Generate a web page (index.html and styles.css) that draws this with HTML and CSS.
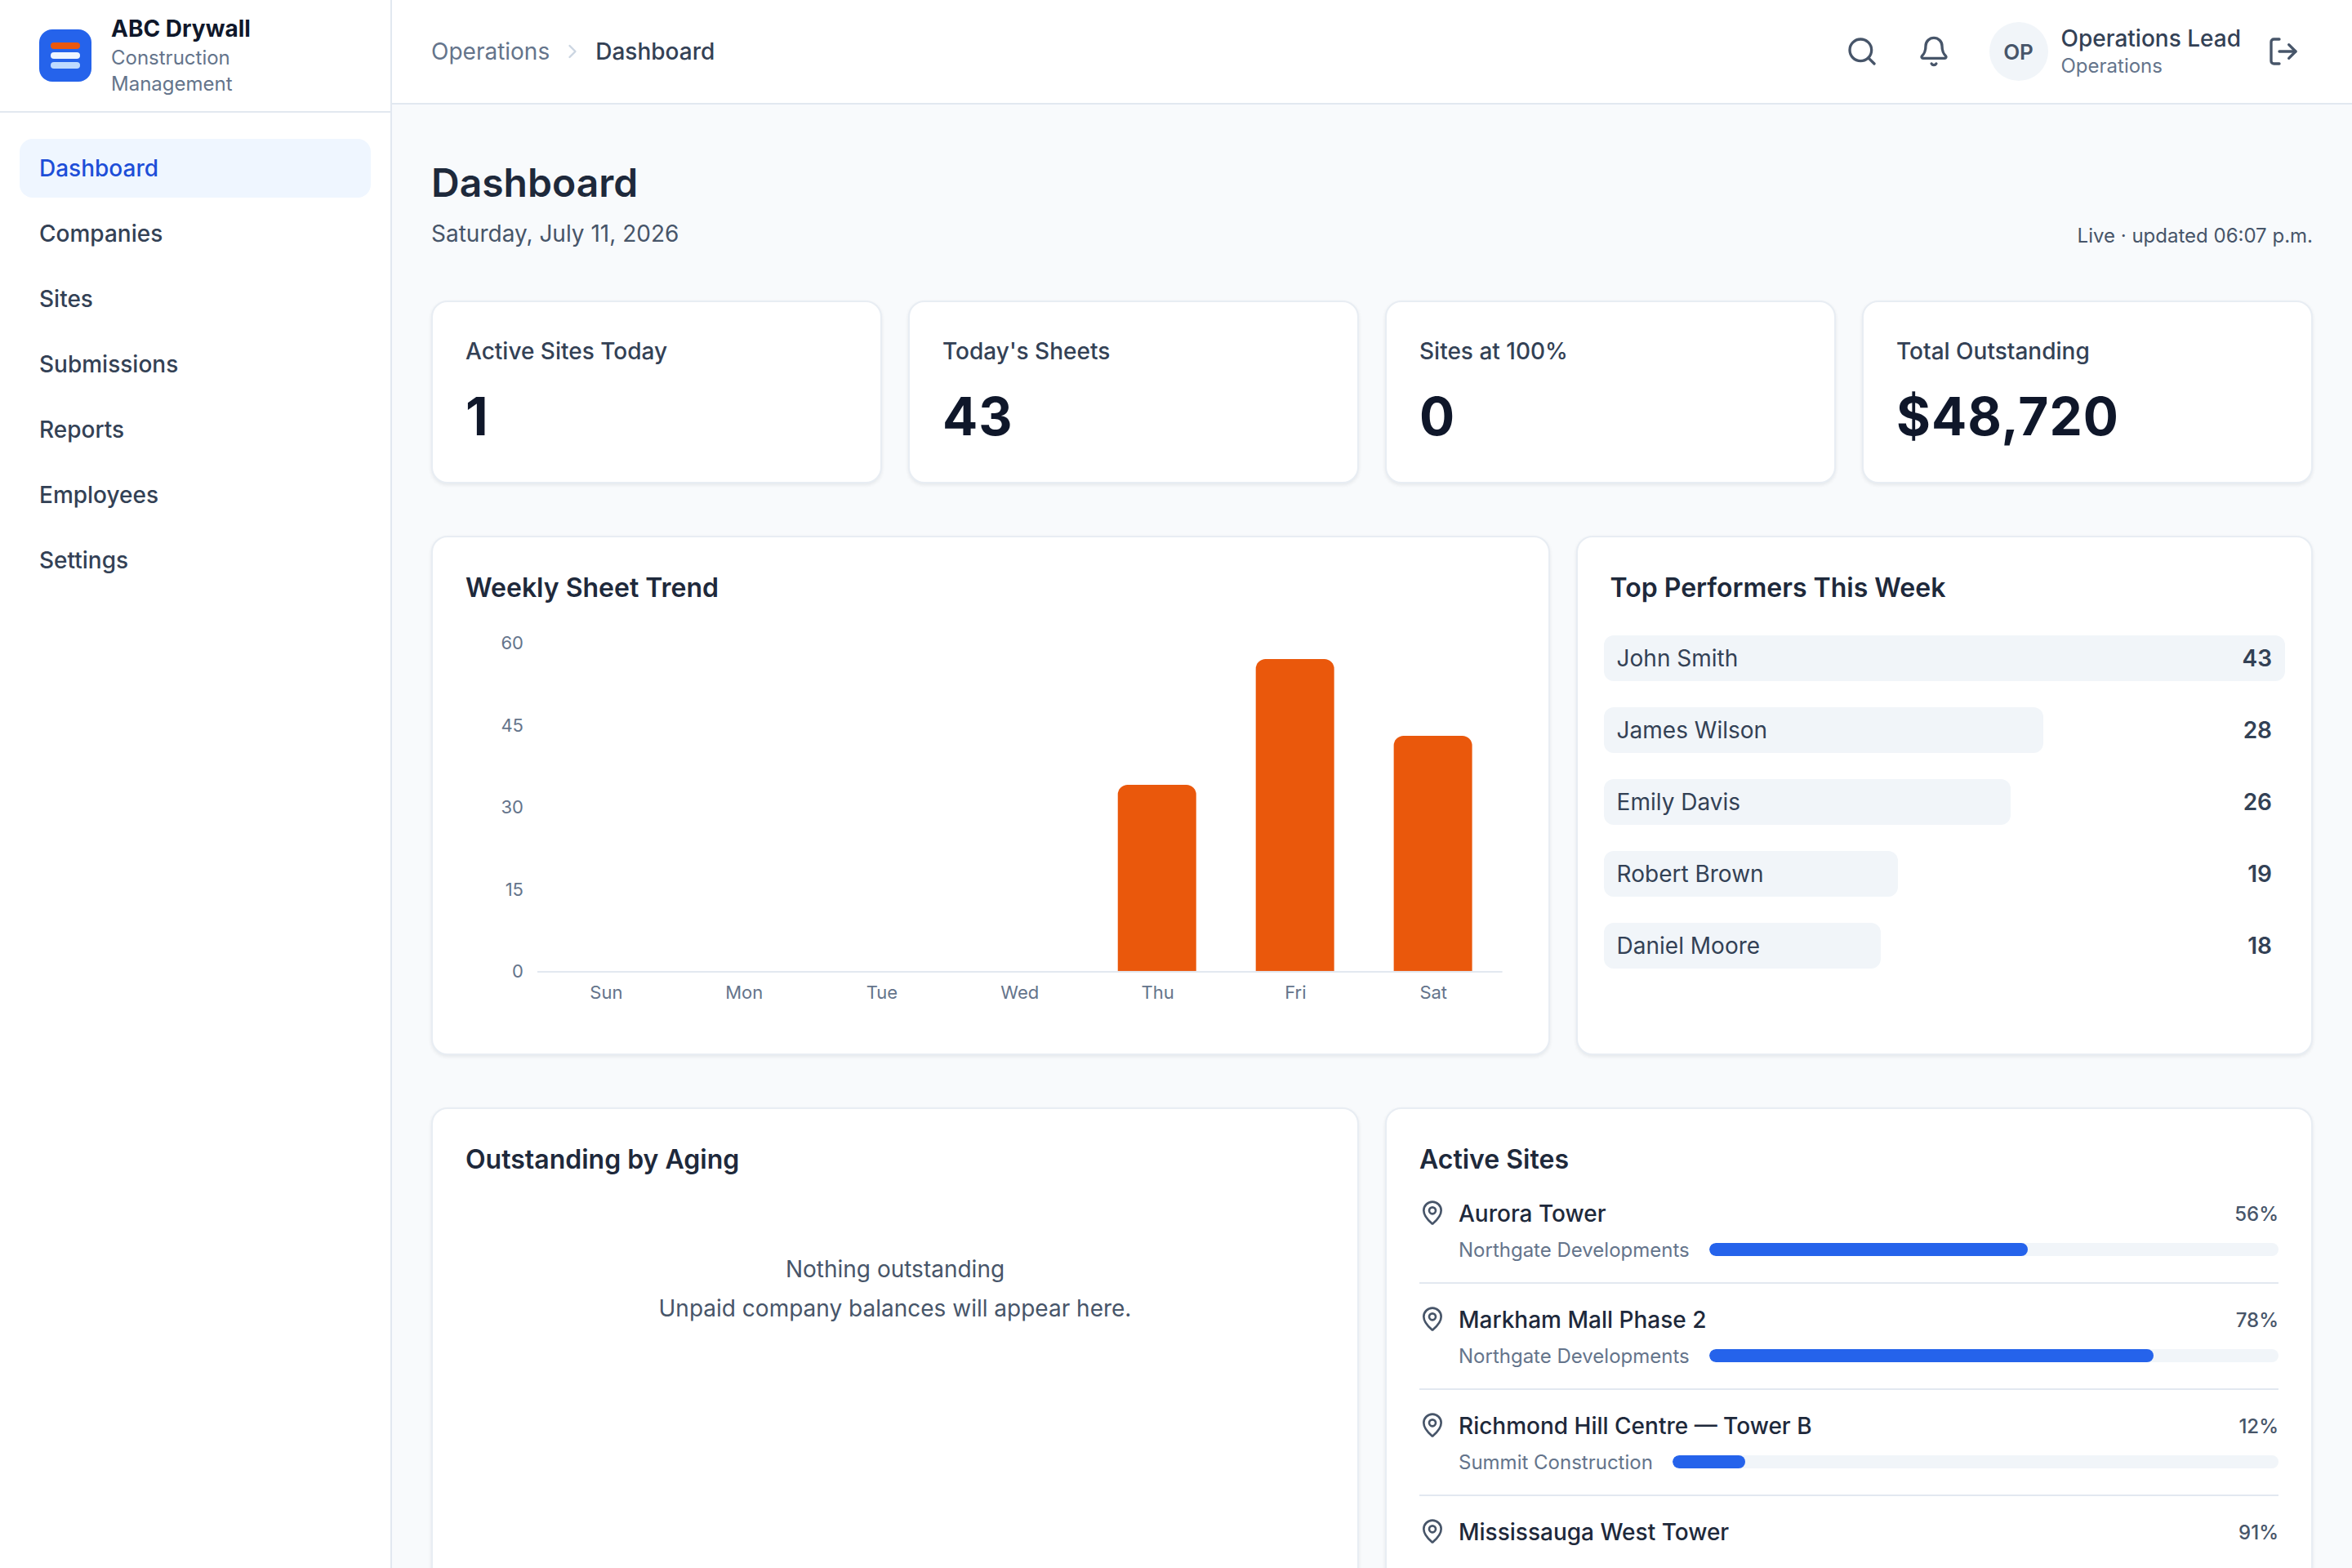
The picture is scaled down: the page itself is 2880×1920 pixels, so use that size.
FILE: index.html
```html
<!DOCTYPE html>
<html lang="en">
<head>
<meta charset="utf-8">
<title>Dashboard</title>
<link rel="stylesheet" href="styles.css">
</head>
<body>
<div class="app">
  <aside class="sidebar">
    <div class="brand">
      <div class="logo"><span class="logo-bar orange"></span><span class="logo-bar white"></span><span class="logo-bar pale"></span></div>
      <div class="brand-text">
        <div class="brand-name">ABC Drywall</div>
        <div class="brand-sub">Construction Management</div>
      </div>
    </div>
    <nav class="nav">
      <a class="nav-item active">Dashboard</a>
      <a class="nav-item">Companies</a>
      <a class="nav-item">Sites</a>
      <a class="nav-item">Submissions</a>
      <a class="nav-item">Reports</a>
      <a class="nav-item">Employees</a>
      <a class="nav-item">Settings</a>
    </nav>
  </aside>
  <div class="main">
    <header class="topbar">
      <div class="crumbs">
        <span class="crumb">Operations</span>
        <svg class="crumb-sep" viewBox="0 0 24 24"><path d="m9 18 6-6-6-6"/></svg>
        <span class="crumb current">Dashboard</span>
      </div>
      <div class="top-actions">
        <div class="icon-group">
          <button class="icon-btn"><svg class="icon" viewBox="0 0 24 24"><circle cx="11" cy="11" r="8"/><path d="m21 21-4.3-4.3"/></svg></button>
          <button class="icon-btn"><svg class="icon" viewBox="0 0 24 24"><path d="M10.268 21a2 2 0 0 0 3.464 0"/><path d="M3.262 15.326A1 1 0 0 0 4 17h16a1 1 0 0 0 .74-1.673C19.41 13.956 18 12.499 18 8A6 6 0 0 0 6 8c0 4.499-1.411 5.956-2.738 7.326"/></svg></button>
        </div>
        <div class="user">
          <div class="avatar">OP</div>
          <div class="user-text">
            <div class="user-name">Operations Lead</div>
            <div class="user-role">Operations</div>
          </div>
          <button class="icon-btn"><svg class="icon" viewBox="0 0 24 24"><path d="m16 17 5-5-5-5"/><path d="M21 12H9"/><path d="M9 21H5a2 2 0 0 1-2-2V5a2 2 0 0 1 2-2h4"/></svg></button>
        </div>
      </div>
    </header>
    <main class="content">
      <div class="page-head">
        <div>
          <h1 class="page-title">Dashboard</h1>
          <p class="page-date">Saturday, July 11, 2026</p>
        </div>
        <div class="live">Live · updated 06:07 p.m.</div>
      </div>

      <section class="stats">
        <div class="card stat"><div class="stat-label">Active Sites Today</div><div class="stat-value">1</div></div>
        <div class="card stat"><div class="stat-label">Today's Sheets</div><div class="stat-value">43</div></div>
        <div class="card stat"><div class="stat-label">Sites at 100%</div><div class="stat-value">0</div></div>
        <div class="card stat"><div class="stat-label">Total Outstanding</div><div class="stat-value">$48,720</div></div>
      </section>

      <section class="row-charts">
        <div class="card chart-card">
          <h2 class="card-title">Weekly Sheet Trend</h2>
          <svg class="chart" viewBox="0 0 1286 484">
            <text class="tick end" x="71" y="29">60</text>
            <text class="tick end" x="71" y="130">45</text>
            <text class="tick end" x="71" y="230">30</text>
            <text class="tick end" x="71" y="331">15</text>
            <text class="tick end" x="71" y="431">0</text>
            <path class="bar" d="M799 423V207a12 12 0 0 1 12-12h72a12 12 0 0 1 12 12V423Z"/>
            <path class="bar" d="M968 423V53a12 12 0 0 1 12-12h72a12 12 0 0 1 12 12V423Z"/>
            <path class="bar" d="M1137 423V147a12 12 0 0 1 12-12h72a12 12 0 0 1 12 12V423Z"/>
            <rect class="axis" x="88" y="423" width="1182" height="2"/>
            <text class="tick mid" x="172.4" y="457">Sun</text>
            <text class="tick mid" x="341.3" y="457">Mon</text>
            <text class="tick mid" x="510.1" y="457">Tue</text>
            <text class="tick mid" x="679" y="457">Wed</text>
            <text class="tick mid" x="847.9" y="457">Thu</text>
            <text class="tick mid" x="1016.7" y="457">Fri</text>
            <text class="tick mid" x="1185.6" y="457">Sat</text>
          </svg>
        </div>
        <div class="card">
          <h2 class="card-title">Top Performers This Week</h2>
          <div class="performers">
            <div class="performer"><span class="perf-fill" style="width:100%"></span><span class="perf-name">John Smith</span><span class="perf-count">43</span></div>
            <div class="performer"><span class="perf-fill" style="width:64.5%"></span><span class="perf-name">James Wilson</span><span class="perf-count">28</span></div>
            <div class="performer"><span class="perf-fill" style="width:59.7%"></span><span class="perf-name">Emily Davis</span><span class="perf-count">26</span></div>
            <div class="performer"><span class="perf-fill" style="width:43.2%"></span><span class="perf-name">Robert Brown</span><span class="perf-count">19</span></div>
            <div class="performer"><span class="perf-fill" style="width:40.7%"></span><span class="perf-name">Daniel Moore</span><span class="perf-count">18</span></div>
          </div>
        </div>
      </section>

      <section class="row-lists">
        <div class="card">
          <h2 class="card-title">Outstanding by Aging</h2>
          <div class="empty">
            <p>Nothing outstanding</p>
            <p>Unpaid company balances will appear here.</p>
          </div>
        </div>
        <div class="card">
          <h2 class="card-title">Active Sites</h2>
          <div class="sites">
            <div class="site">
              <svg class="pin" viewBox="0 0 24 24"><path d="M20 10c0 4.993-5.539 10.193-7.399 11.799a1 1 0 0 1-1.202 0C9.539 20.193 4 14.993 4 10a8 8 0 0 1 16 0"/><circle cx="12" cy="10" r="3"/></svg>
              <div class="site-body">
                <div class="site-head"><span class="site-name">Aurora Tower</span><span class="site-pct">56%</span></div>
                <div class="site-foot"><span class="site-co">Northgate Developments</span><div class="track"><div class="fill" style="width:56%"></div></div></div>
              </div>
            </div>
            <div class="site">
              <svg class="pin" viewBox="0 0 24 24"><path d="M20 10c0 4.993-5.539 10.193-7.399 11.799a1 1 0 0 1-1.202 0C9.539 20.193 4 14.993 4 10a8 8 0 0 1 16 0"/><circle cx="12" cy="10" r="3"/></svg>
              <div class="site-body">
                <div class="site-head"><span class="site-name">Markham Mall Phase 2</span><span class="site-pct">78%</span></div>
                <div class="site-foot"><span class="site-co">Northgate Developments</span><div class="track"><div class="fill" style="width:78%"></div></div></div>
              </div>
            </div>
            <div class="site">
              <svg class="pin" viewBox="0 0 24 24"><path d="M20 10c0 4.993-5.539 10.193-7.399 11.799a1 1 0 0 1-1.202 0C9.539 20.193 4 14.993 4 10a8 8 0 0 1 16 0"/><circle cx="12" cy="10" r="3"/></svg>
              <div class="site-body">
                <div class="site-head"><span class="site-name">Richmond Hill Centre — Tower B</span><span class="site-pct">12%</span></div>
                <div class="site-foot"><span class="site-co">Summit Construction</span><div class="track"><div class="fill" style="width:12%"></div></div></div>
              </div>
            </div>
            <div class="site">
              <svg class="pin" viewBox="0 0 24 24"><path d="M20 10c0 4.993-5.539 10.193-7.399 11.799a1 1 0 0 1-1.202 0C9.539 20.193 4 14.993 4 10a8 8 0 0 1 16 0"/><circle cx="12" cy="10" r="3"/></svg>
              <div class="site-body">
                <div class="site-head"><span class="site-name">Mississauga West Tower</span><span class="site-pct">91%</span></div>
              </div>
            </div>
          </div>
        </div>
      </section>
    </main>
  </div>
</div>
</body>
</html>
```

FILE: styles.css
```css
* { box-sizing: border-box; }
html, body { margin: 0; height: 100%; }
body {
  font-family: Inter, "Noto Sans", sans-serif;
  color: #0f172a;
  background: #f8fafc;
  overflow: hidden;
}
h1, h2, p { margin: 0; }

.app { display: flex; height: 1920px; overflow: hidden; }

.sidebar {
  width: 480px;
  flex: none;
  background: #fff;
  border-right: 2px solid #e2e8f0;
}
.brand {
  height: 138px;
  display: flex;
  align-items: center;
  gap: 24px;
  padding: 0 48px;
  border-bottom: 2px solid #e2e8f0;
}
.logo {
  width: 64px;
  height: 64px;
  flex: none;
  border-radius: 16px;
  background: #2563eb;
  display: flex;
  flex-direction: column;
  align-items: center;
  justify-content: center;
  gap: 4px;
}
.logo-bar { width: 36px; height: 8px; border-radius: 4px; }
.logo-bar.orange { background: #ea580c; }
.logo-bar.white { background: #eff6ff; }
.logo-bar.pale { background: #bfdbfe; }
.brand-name { font-size: 28px; line-height: 36px; font-weight: 700; color: #0f172a; }
.brand-sub { font-size: 24px; line-height: 32px; color: #64748b; margin-top: 2px; }

.nav { display: flex; flex-direction: column; gap: 8px; padding: 32px 24px; }
.nav-item {
  height: 72px;
  display: flex;
  align-items: center;
  padding: 0 24px;
  border-radius: 16px;
  font-size: 28px;
  font-weight: 500;
  color: #334155;
}
.nav-item.active { background: #eff6ff; color: #1d4ed8; }

.main { flex: 1; min-width: 0; display: flex; flex-direction: column; }

.topbar {
  height: 128px;
  flex: none;
  display: flex;
  align-items: center;
  justify-content: space-between;
  padding: 0 48px;
  background: #fff;
  border-bottom: 2px solid #e2e8f0;
}
.crumbs { display: flex; align-items: center; gap: 14px; }
.crumb { font-size: 28px; color: #64748b; }
.crumb.current { font-weight: 500; color: #334155; }
.crumb-sep { width: 28px; height: 28px; fill: none; stroke: #cbd5e1; stroke-width: 2; stroke-linecap: round; stroke-linejoin: round; }

.top-actions { display: flex; align-items: center; gap: 32px; }
.icon-group { display: flex; align-items: center; gap: 16px; }
.icon-btn { width: 72px; height: 72px; padding: 16px; border: 0; background: none; display: flex; }
.icon { width: 40px; height: 40px; fill: none; stroke: #475569; stroke-width: 2; stroke-linecap: round; stroke-linejoin: round; }
.user { display: flex; align-items: center; gap: 16px; }
.avatar {
  width: 72px;
  height: 72px;
  border-radius: 50%;
  background: #f1f5f9;
  color: #475569;
  display: flex;
  align-items: center;
  justify-content: center;
  font-size: 26px;
  font-weight: 600;
}
.user-name { font-size: 28px; line-height: 36px; font-weight: 500; color: #334155; }
.user-role { font-size: 24px; line-height: 32px; color: #64748b; }

.content {
  flex: 1;
  min-height: 0;
  overflow: hidden;
  padding: 64px 48px;
  display: flex;
  flex-direction: column;
  gap: 64px;
}
.page-head { display: flex; justify-content: space-between; align-items: flex-end; margin-bottom: -2px; flex: none; }
.page-title { font-size: 48px; line-height: 64px; font-weight: 600; color: #1e293b; }
.page-date { font-size: 28px; line-height: 40px; margin-top: 10px; color: #475569; }
.live { font-size: 24px; line-height: 32px; color: #475569; margin-bottom: 1px; }

.card {
  background: #fff;
  border: 2px solid #e8edf3;
  border-radius: 20px;
  box-shadow: 0 2px 4px rgba(15, 23, 42, .08);
  padding: 40px;
}
.card-title { font-size: 32px; line-height: 44px; font-weight: 600; color: #1e293b; }

.stats { display: grid; grid-template-columns: repeat(4, 1fr); gap: 32px; flex: none; }
.stat-label { font-size: 28px; line-height: 40px; font-weight: 500; color: #334155; }
.stat-value { font-size: 64px; line-height: 80px; font-weight: 700; color: #0f172a; margin-top: 20px; letter-spacing: 1px; }

.row-charts { display: grid; grid-template-columns: repeat(5, 1fr); gap: 32px; flex: none; }
.chart-card { grid-column: span 3; }
.row-charts > .card:last-child { grid-column: span 2; }
.chart { display: block; width: 100%; height: 484px; margin-top: 24px; }
.tick { font-size: 22px; fill: #64748b; }
.tick.end { text-anchor: end; }
.tick.mid { text-anchor: middle; }
.bar { fill: #ea580c; }
.axis { fill: #e2e8f0; }

.performers { display: flex; flex-direction: column; gap: 32px; margin: 36px -8px 0; }
.performer {
  position: relative;
  height: 56px;
  display: flex;
  align-items: center;
  justify-content: space-between;
  padding: 0 16px;
  font-size: 28px;
  color: #334155;
}
.perf-fill { position: absolute; left: 0; top: 0; bottom: 0; background: #f1f5f9; border-radius: 12px; }
.perf-name { position: relative; }
.perf-count { position: relative; font-weight: 600; }

.row-lists { display: grid; grid-template-columns: repeat(2, 1fr); gap: 32px; flex: none; }
.empty { padding-top: 88px; text-align: center; font-size: 28px; line-height: 48px; color: #475569; }

.sites { margin-top: 24px; }
.site { display: flex; gap: 16px; padding-bottom: 24px; margin-bottom: 24px; border-bottom: 2px solid #e2e8f0; }
.site:last-child { border-bottom: 0; }
.pin { width: 32px; height: 32px; flex: none; margin-top: 3px; fill: none; stroke: #475569; stroke-width: 2; stroke-linecap: round; stroke-linejoin: round; }
.site-body { flex: 1; min-width: 0; }
.site-head { display: flex; justify-content: space-between; align-items: center; height: 40px; }
.site-name { font-size: 28px; font-weight: 500; color: #1e293b; }
.site-pct { font-size: 24px; font-weight: 500; color: #475569; }
.site-foot { display: flex; align-items: center; gap: 24px; margin-top: 8px; height: 32px; }
.site-co { font-size: 24px; color: #64748b; }
.track { flex: 1; height: 16px; border-radius: 8px; background: #f1f5f9; overflow: hidden; }
.fill { height: 100%; border-radius: 8px; background: #2563eb; }
```
